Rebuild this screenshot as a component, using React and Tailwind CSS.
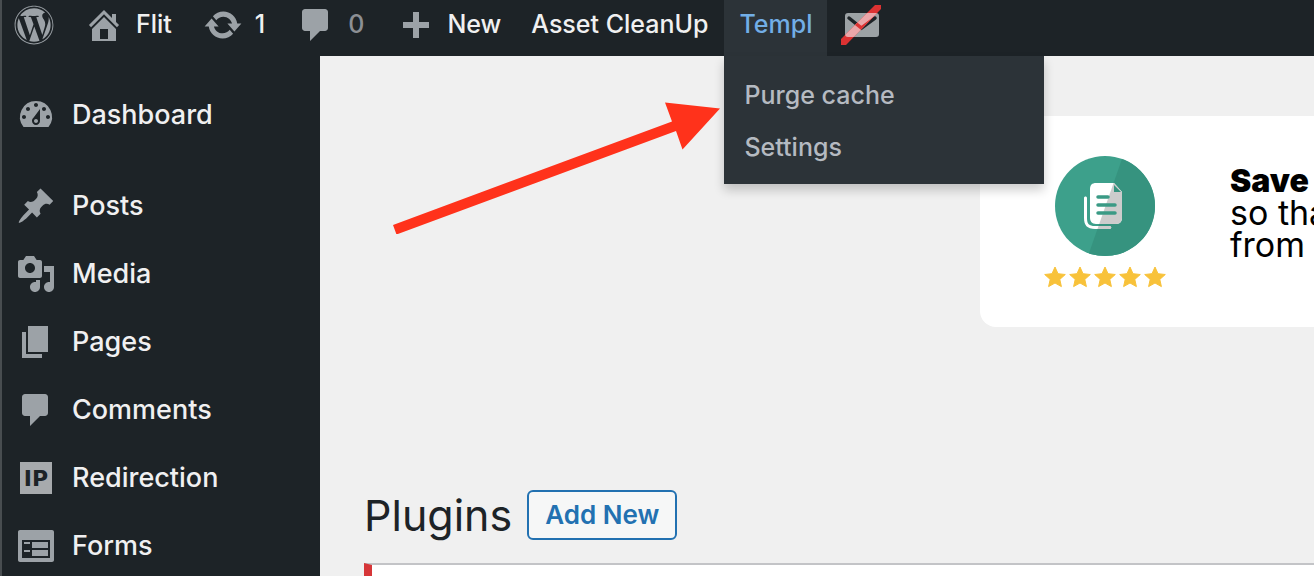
import clsx from "clsx";
import { FaWordpress } from "react-icons/fa";

const ICONS = {
  home: "M16 8.5l1.53 1.53-1.06 1.06L10 4.6l-6.47 6.49-1.06-1.06L10 2.5l4 4v-2h2v4zm-6-2.46l6 5.99V18H4v-5.97zM12 17v-5H8v5h4z",
  update:
    "M10.2 3.28c3.53 0 6.43 2.61 6.92 6h2.08l-3.5 4-3.5-4h2.32c-.45-1.97-2.21-3.45-4.32-3.45-1.45 0-2.73.71-3.54 1.78L4.95 5.66C6.23 4.2 8.11 3.28 10.2 3.28zm-.4 13.44c-3.52 0-6.43-2.61-6.92-6H.8l3.5-4c1.17 1.33 2.33 2.67 3.5 4H5.48c.45 1.97 2.21 3.45 4.32 3.45 1.45 0 2.73-.71 3.54-1.78l1.71 1.95c-1.28 1.46-3.15 2.38-5.25 2.38z",
  plus: "M17 8.500v3h-5v5H9v-5H4v-3h5v-5h3v5h5z",
  dashboard:
    "M3.76 16h12.48A7.998 7.998 0 0 0 10 3a7.998 7.998 0 0 0-6.24 13zM10 4c.55 0 1 .45 1 1s-.45 1-1 1-1-.45-1-1 .45-1 1-1zM6 6c.55 0 1 .45 1 1s-.45 1-1 1-1-.45-1-1 .45-1 1-1zm8 0c.55 0 1 .45 1 1s-.45 1-1 1-1-.45-1-1 .45-1 1-1zm-5.37 5.55L12 7v6c0 1.1-.9 2-2 2s-2-.9-2-2c0-.57.24-1.08.63-1.45zM4 10c.55 0 1 .45 1 1s-.45 1-1 1-1-.45-1-1 .45-1 1-1zm12 0c.55 0 1 .45 1 1s-.45 1-1 1-1-.45-1-1 .45-1 1-1zm-5 3c0-.55-.45-1-1-1s-1 .45-1 1 .45 1 1 1 1-.45 1-1z",
  post: "M10.44 3.02l1.82-1.82 6.36 6.35-1.83 1.82c-1.05-.68-2.48-.57-3.41.36l-.75.75c-.92.93-1.04 2.35-.35 3.41l-1.83 1.82-2.41-2.41-2.8 2.79c-.42.42-3.38 2.71-3.8 2.29s1.86-3.39 2.28-3.81l2.79-2.79L4.1 9.36l1.83-1.82c1.05.69 2.48.57 3.4-.36l.75-.75c.93-.92 1.05-2.35.36-3.41z",
  media:
    "M13 11V4c0-.55-.45-1-1-1h-1.67L9 1H5L3.67 3H2c-.55 0-1 .45-1 1v7c0 .55.45 1 1 1h10c.55 0 1-.45 1-1zM7 4.5c1.38 0 2.5 1.12 2.5 2.5S8.38 9.5 7 9.5 4.5 8.38 4.5 7 5.62 4.5 7 4.5zM14 6h5v10.5c0 1.38-1.12 2.5-2.5 2.5S14 17.88 14 16.5s1.12-2.5 2.5-2.5c.17 0 .34.02.5.05V9h-3V6zm-4 8.05V13h2v3.5c0 1.38-1.12 2.5-2.5 2.5S7 17.88 7 16.5 8.12 14 9.5 14c.17 0 .34.02.5.05z",
  page: "M6 15V2h10v13H6zm-1 1h8v2H3V5h2v11z",
  comment:
    "M4.5 2h10c.83 0 1.5.67 1.5 1.5v8c0 .83-.67 1.5-1.5 1.5H12l-5 5v-5H4.5C3.67 13 3 12.33 3 11.5v-8C3 2.67 3.67 2 4.5 2z",
  form: "M2 2h16c.55 0 1 .45 1 1v14c0 .55-.45 1-1 1H2c-.55 0-1-.45-1-1V3c0-.55.45-1 1-1zm1 5v9h14V7zm1 1h3v1H4zm4 0h8v3H8zm-4 4h3v1H4zm4 0h8v3H8z",
};

const MENU = [
  { label: "Posts", icon: "post" },
  { label: "Media", icon: "media" },
  { label: "Pages", icon: "page" },
  { label: "Comments", icon: "comment" },
  { label: "Redirection", icon: "ip" },
  { label: "Forms", icon: "form" },
];

function Icon({ name }) {
  return (
    <svg
      viewBox="0 0 20 20"
      className="size-10 shrink-0 text-[#9ca2a7]"
      fill="currentColor"
      aria-hidden="true"
    >
      {name === "ip" ? (
        <>
          <path d="M2 2h16v16H2z" fill="#a7aaad" />
          <text
            x="10"
            y="14"
            textAnchor="middle"
            fontFamily="'DejaVu Sans', sans-serif"
            fontWeight="700"
            fontSize="11"
            fill="#1d2327"
          >
            IP
          </text>
        </>
      ) : (
        <path d={ICONS[name]} fillRule="evenodd" />
      )}
    </svg>
  );
}

function MailOff() {
  return (
    <svg viewBox="0 0 40 40" className="size-10" aria-hidden="true">
      <defs>
        <clipPath id="slash">
          <path d="M0 34L34 0h6v4L5 40H0z" />
        </clipPath>
      </defs>
      <rect x="4" y="8" width="34" height="24" rx="3" fill="#9ca2a5" />
      <path
        d="M8 13l12.5 10L34 13"
        fill="none"
        stroke="#1d2327"
        strokeWidth="3.5"
        strokeLinecap="round"
      />
      <g clipPath="url(#slash)">
        <path d="M0 0h40v40H0z" fill="#dc3232" />
        <rect x="4" y="8" width="34" height="24" rx="3" fill="#eaa6a9" />
        <path
          d="M8 13l12.5 10L34 13"
          fill="none"
          stroke="#dc3232"
          strokeWidth="3.5"
        />
      </g>
    </svg>
  );
}

function BarItem({ children, className }) {
  return (
    <a
      href="#"
      className={clsx("flex h-14 shrink-0 items-center pb-1.5", className)}
    >
      {children}
    </a>
  );
}

function AdminBar() {
  return (
    <header className="relative z-10 flex h-14 bg-[#1d2327] pl-3 text-[25px] font-medium text-[#f0f0f1]">
      <BarItem>
        <FaWordpress className="size-10 text-[#9ca2a7]" aria-label="WordPress" />
      </BarItem>
      <BarItem className="ml-[30px] gap-3">
        <Icon name="home" />
        Flit
      </BarItem>
      <BarItem className="ml-[31px] gap-3">
        <Icon name="update" />1
      </BarItem>
      <BarItem className="ml-[31px] gap-3 text-[#8c8f94]">
        <Icon name="comment" />0
      </BarItem>
      <BarItem className="ml-[31px] gap-3">
        <Icon name="plus" />
        New
      </BarItem>
      <BarItem className="ml-[30px]">Asset CleanUp</BarItem>
      <div className="relative ml-4">
        <BarItem className="bg-[#2c3338] px-[15px] text-[#72aee6]">
          Templ
        </BarItem>
        <nav className="absolute top-14 left-0 flex w-80 flex-col bg-[#2c3338] pt-[13px] pb-[11px] text-[#b5bac1] shadow-[0_6px_10px_rgba(0,0,0,0.2)]">
          <a href="#" className="px-5 leading-[52px]">
            Purge cache
          </a>
          <a href="#" className="px-5 leading-[52px]">
            Settings
          </a>
        </nav>
      </div>
      <BarItem className="ml-3.5">
        <MailOff />
      </BarItem>
    </header>
  );
}

function MenuItem({ label, icon }) {
  return (
    <a
      href="#"
      className="flex h-[68px] items-center gap-4 pl-3.5 text-[27px] font-medium text-[#f0f0f1]"
    >
      <Icon name={icon} />
      {label}
    </a>
  );
}

function CopyLogo() {
  return (
    <svg viewBox="0 0 100 100" className="size-[100px]" aria-hidden="true">
      <defs>
        <clipPath id="disc">
          <circle cx="50" cy="50" r="50" />
        </clipPath>
        <clipPath id="shade">
          <path d="M68 0L33 100h67V0z" />
        </clipPath>
        <g id="sheets">
          <path d="M41 27h18l8 9v26c0 3-2 6-6 6H41c-4 0-6-3-6-6V33c0-4 2-6 6-6z" />
          <path d="M29 42c0-2 3-2 3 0v20c0 6 2 8 8 8h14c3 0 3 3 0 3H40c-8 0-11-4-11-11z" />
        </g>
      </defs>
      <g clipPath="url(#disc)">
        <path d="M0 0h100v100H0z" fill="#3da08b" />
        <path d="M68 0L33 100h67V0z" fill="#36937f" />
      </g>
      <use href="#sheets" fill="#fff" />
      <g clipPath="url(#shade)">
        <use href="#sheets" fill="#ccc" />
      </g>
      <path d="M59 29v7h7z" fill="#36937f" />
      <path
        d="M43 41h10M43 49h17M43 57h17"
        stroke="#3a9a85"
        strokeWidth="3.5"
        strokeLinecap="round"
      />
    </svg>
  );
}

function Star() {
  return (
    <svg viewBox="0 0 22 22" className="size-[22px]" aria-hidden="true">
      <path
        d="M11 1l3 6.700 7.300.800-5.500 4.900 1.600 7.200L11 17l-6.400 3.600 1.600-7.200L.700 8.500 8 7.700z"
        fill="#f8c23a"
        stroke="#f8c23a"
        strokeLinejoin="round"
      />
    </svg>
  );
}

function Banner() {
  return (
    <section className="mt-[60px] ml-[660px] flex gap-16 overflow-hidden rounded-l-2xl bg-white pt-10 pb-[39px] pl-16">
      <div className="flex shrink-0 flex-col items-center gap-2.5">
        <CopyLogo />
        <div className="flex gap-[3px]">
          {[1, 2, 3, 4, 5].map((n) => (
            <Star key={n} />
          ))}
        </div>
      </div>
      <p className="pt-2 text-[34px] leading-8 whitespace-nowrap text-black">
        <strong className="text-[32px] font-black">Save</strong>
        <br />
        so that
        <br />
        from
      </p>
    </section>
  );
}

// Red pointer towards the "Purge cache" entry
function Arrow() {
  return (
    <svg
      viewBox="0 0 327 132"
      className="absolute top-[102px] left-[391px] z-20 h-[132px] w-[327px]"
      aria-hidden="true"
    >
      <path
        d="M0 123L279 19.500L272 .5L327 6.500L289.500 47.500L283 29L3.500 132.500z"
        fill="#ff321b"
      />
    </svg>
  );
}

function App() {
  return (
    <div className="relative flex h-screen flex-col overflow-hidden border-l-2 border-[#484d50] bg-[#f0f0f0] font-[Inter,sans-serif]">
      <AdminBar />
      <div className="flex min-h-0 flex-1">
        <aside className="w-[318px] shrink-0 bg-[#1d2327] pt-[25px]">
          <nav>
            <MenuItem label="Dashboard" icon="dashboard" />
            <div className="h-[23px]" />
            {MENU.map((item) => (
              <MenuItem key={item.label} {...item} />
            ))}
          </nav>
        </aside>
        <main className="min-w-0 flex-1">
          <Banner />
          <div className="mt-[163px] ml-11 flex items-center gap-[15px]">
            <h1 className="text-[43px] leading-[50px] text-[#1d2327]">
              Plugins
            </h1>
            <button className="h-[50px] rounded-md border-2 border-[#2271b1] bg-[#f6f7f7] px-4 text-[26px] leading-none font-semibold text-[#2271b1]">
              Add New
            </button>
          </div>
          <div className="mt-[23px] ml-11 h-24 border-t-2 border-l-8 border-t-[#c3c4c7] border-l-[#d63638] bg-white" />
        </main>
      </div>
      <Arrow />
    </div>
  );
}

export default App;
